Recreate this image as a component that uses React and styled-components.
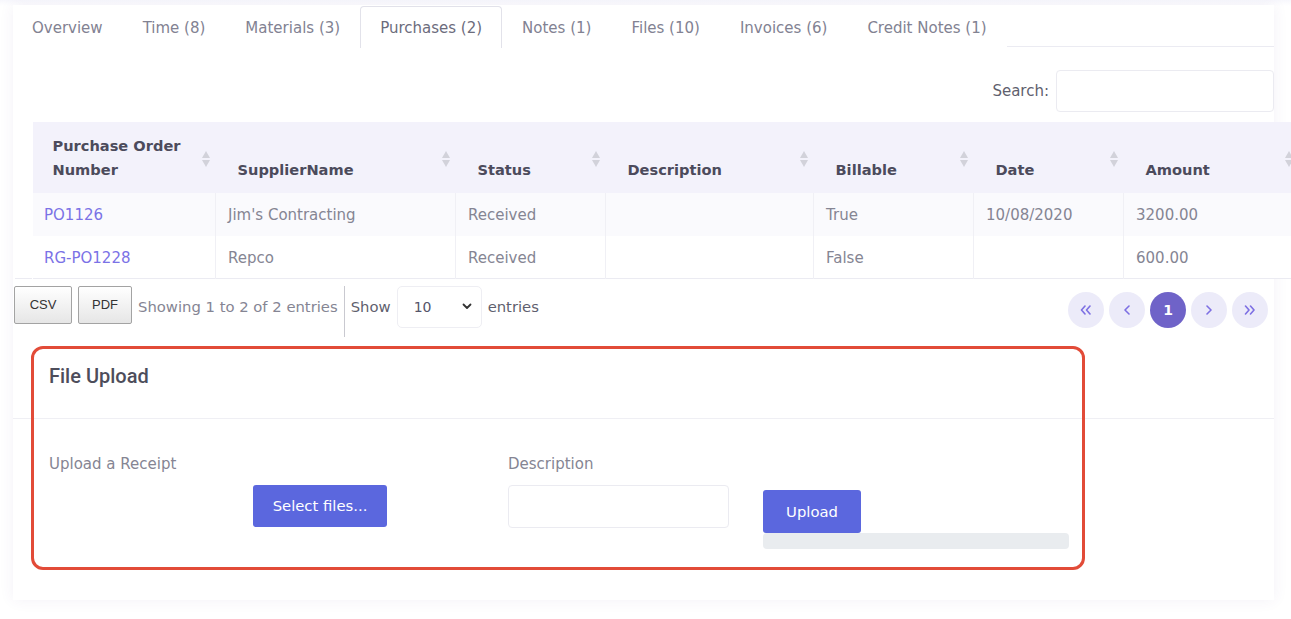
import React from "react";
import styled, { createGlobalStyle } from "styled-components";

const GlobalStyle = createGlobalStyle`
	html, body {
		margin: 0;
		padding: 0;
		background: #ffffff;
		overflow: hidden;
	}
	body {
		font-family: "DejaVu Sans", "Open Sans", sans-serif;
	}
	* {
		box-sizing: border-box;
	}
`;

const Page = styled.div`
	position: relative;
	width: 1291px;
	height: 619px;
	padding: 5px 17px 0 13px;
	background: linear-gradient(#f7f7fc, #ffffff 6px);
`;

const Card = styled.div`
	background: #ffffff;
	height: 595px;
	box-shadow: 0 0 14px rgba(82, 63, 140, 0.07);
`;

const TabBar = styled.ul`
	display: flex;
	list-style: none;
	margin: 0;
	padding: 1px 0 0 0;
	height: 42px;
	border-bottom: 1px solid #ebebf2;
`;

const Tab = styled.li`
	display: flex;
	align-items: center;
	padding: 0 19px 0 ${(p) => (p.$first ? "18px" : "19px")};
	height: 42px;
	font-size: 15px;
	color: ${(p) => (p.$active ? "#6c6c7c" : "#828292")};
	background: #ffffff;
	border: 1px solid ${(p) => (p.$active ? "#e2e2ea" : "transparent")};
	border-bottom: none;
	border-radius: 4px 4px 0 0;
	margin-bottom: -1px;
	white-space: nowrap;
`;

const SearchRow = styled.div`
	display: flex;
	justify-content: flex-end;
	align-items: center;
	gap: 7px;
	height: 75px;
	padding-top: 13px;
`;

const SearchLabel = styled.label`
	font-size: 15px;
	color: #5f5f6e;
`;

const SearchInput = styled.input`
	width: 218px;
	height: 42px;
	border: 1px solid #ebebf1;
	border-radius: 4px;
	outline: none;
`;

const Table = styled.table`
	border-collapse: collapse;
	table-layout: fixed;
	width: 1284px;
	margin-left: 1px;
`;

const HeadCell = styled.th`
	position: relative;
	height: 71px;
	padding: 0 22px 11px ${(p) => p.$pl || "22px"};
	vertical-align: bottom;
	text-align: left;
	font-size: 14.6px;
	font-weight: 700;
	line-height: 24px;
	color: #4c4b5c;
	background: ${(p) => (p.$blank ? "#ffffff" : "#f3f2fb")};

	${(p) =>
		!p.$blank &&
		`
	&::before, &::after {
		content: "";
		position: absolute;
		right: 6px;
		border-left: 4.5px solid transparent;
		border-right: 4.5px solid transparent;
	}
	&::before {
		top: 29px;
		border-bottom: 7px solid #d2d2da;
	}
	&::after {
		top: 38px;
		border-top: 7px solid #d2d2da;
	}`}
`;

const Row = styled.tr`
	background: ${(p) => (p.$alt ? "#fafafd" : "#ffffff")};
	border-bottom: 1px solid ${(p) => (p.$last ? "#ebebf2" : "transparent")};
`;

const Cell = styled.td`
	height: ${(p) => (p.$tall ? "43px" : "42px")};
	padding: 1px 12px 0 ${(p) => p.$pl || "12px"};
	font-size: 15px;
	color: #858593;
	white-space: nowrap;
	border-left: 1px solid ${(p) => (p.$noline ? "transparent" : "#f0f0f5")};
	background: ${(p) => (p.$blank ? "#ffffff" : "transparent")};
`;

const Link = styled.a`
	color: #7b72e6;
	text-decoration: none;
`;

const Footer = styled.div`
	display: flex;
	align-items: flex-start;
	height: 58px;
	padding: 7px 6px 0 1px;
`;

const ExportButton = styled.button`
	height: 38px;
	width: ${(p) => p.$w};
	margin-right: 6px;
	font-family: "Liberation Sans", Arial, sans-serif;
	font-size: 13px;
	color: #333333;
	background: linear-gradient(#ffffff, #e6e6e6);
	border: 1px solid #a3a3a3;
	border-radius: 2px;
	padding: 0;
`;

const InfoText = styled.div`
	height: 42px;
	display: flex;
	align-items: center;
	font-size: 14.8px;
	color: #858593;
	white-space: nowrap;
`;

const LengthBox = styled.div`
	display: flex;
	align-items: flex-start;
	gap: 6px;
	height: 51px;
	margin-left: 6px;
	padding-left: 6px;
	border-left: 1px solid #c9c9d0;
	font-size: 14.8px;
	color: #5f5f6e;
`;

const LengthText = styled.span`
	height: 42px;
	display: flex;
	align-items: center;
`;

const SelectBox = styled.div`
	display: flex;
	align-items: center;
	justify-content: space-between;
	width: 85px;
	height: 42px;
	padding: 0 9px 0 16px;
	border: 1px solid #eeeef3;
	border-radius: 5px;
	color: #55556a;
	font-size: 14px;
`;

const Pager = styled.div`
	display: flex;
	gap: 5px;
	margin-left: auto;
	padding-top: 6px;
`;

const PageDot = styled.div`
	width: 36px;
	height: 36px;
	border-radius: 50%;
	display: flex;
	align-items: center;
	justify-content: center;
	background: ${(p) => (p.$active ? "#6f63c8" : "#ecebf9")};
	color: ${(p) => (p.$active ? "#ffffff" : "#7d6fe3")};
	font-size: 14px;
	font-weight: 700;
`;

const Upload = styled.section`
	border-top: 1px solid transparent;
`;

const UploadHeader = styled.div`
	height: 81px;
	display: flex;
	align-items: center;
	padding: 0 0 4px 36px;
	border-bottom: 1px solid #efeff4;
`;

const UploadTitle = styled.h3`
	margin: 0;
	font-family: Roboto, sans-serif;
	font-weight: 500;
	font-size: 20px;
	color: #4d4d5b;
`;

const UploadBody = styled.div`
	display: grid;
	grid-template-columns: 459px 255px 306px;
	padding: 33px 0 0 36px;
`;

const Field = styled.div`
	display: flex;
	flex-direction: column;
	align-items: flex-start;
`;

const FieldLabel = styled.div`
	font-size: 15px;
	color: #858593;
	height: 24px;
	line-height: 24px;
	margin-bottom: 9px;
`;

const PrimaryButton = styled.button`
	height: ${(p) => p.$h || "42px"};
	width: ${(p) => p.$w};
	padding: 0;
	margin-left: ${(p) => p.$ml || "0"};
	margin-top: ${(p) => p.$mt || "0"};
	background: #5b67de;
	color: #ffffff;
	border: none;
	border-radius: 3px;
	font-family: "DejaVu Sans", sans-serif;
	font-size: 14.8px;
	font-weight: 500;
`;

const TextBox = styled.input`
	width: 221px;
	height: 43px;
	border: 1px solid #ebebf1;
	border-radius: 4px;
	outline: none;
`;

const Progress = styled.div`
	width: 306px;
	height: 16px;
	background: #e9ecef;
	border-radius: 4px;
`;

const Highlight = styled.div`
	position: absolute;
	left: 31px;
	top: 346px;
	width: 1054px;
	height: 224px;
	border: 3px solid #e24b38;
	border-radius: 12px;
	pointer-events: none;
`;

const tabs = ["Overview", "Time (8)", "Materials (3)", "Purchases (2)", "Notes (1)", "Files (10)", "Invoices (6)", "Credit Notes (1)"];

const columns = [
	{ label: "Purchase Order Number", w: 183, pl: "20px" },
	{ label: "SupplierName", w: 240 },
	{ label: "Status", w: 150 },
	{ label: "Description", w: 208 },
	{ label: "Billable", w: 160 },
	{ label: "Date", w: 150 },
	{ label: "Amount", w: 175 },
];

const rows = [
	["PO1126", "Jim's Contracting", "Received", "", "True", "10/08/2020", "3200.00"],
	["RG-PO1228", "Repco", "Received", "", "False", "", "600.00"],
];

function Chevron({ dir }) {
	const d = dir === "left" ? "M6 1 L2 5 L6 9" : "M2 1 L6 5 L2 9";
	return (
		<svg width="8" height="10" viewBox="0 0 8 10">
			<path d={d} fill="none" stroke="currentColor" strokeWidth="1.6" strokeLinecap="round" strokeLinejoin="round" />
		</svg>
	);
}

function Double({ dir }) {
	const d = dir === "left" ? "M5 1 L1.5 5 L5 9 M10 1 L6.5 5 L10 9" : "M1.5 1 L5 5 L1.5 9 M6.5 1 L10 5 L6.5 9";
	return (
		<svg width="12" height="10" viewBox="0 0 12 10">
			<path d={d} fill="none" stroke="currentColor" strokeWidth="1.6" strokeLinecap="round" strokeLinejoin="round" />
		</svg>
	);
}

export default function App() {
	return (
		<>
			<GlobalStyle />
			<Page>
				<Card>
					<TabBar>
						{tabs.map((t, i) => (
							<Tab key={t} $first={i === 0} $active={t === "Purchases (2)"}>
								{t}
							</Tab>
						))}
					</TabBar>

					<SearchRow>
						<SearchLabel>Search:</SearchLabel>
						<SearchInput />
					</SearchRow>

					<Table>
						<colgroup>
							<col style={{ width: 18 }} />
							{columns.map((c) => (
								<col key={c.label} style={{ width: c.w }} />
							))}
						</colgroup>
						<thead>
							<tr>
								<HeadCell $blank />
								{columns.map((c) => (
									<HeadCell key={c.label} $pl={c.pl}>
										{c.label}
									</HeadCell>
								))}
							</tr>
						</thead>
						<tbody>
							{rows.map((r, ri) => (
								<Row key={r[0]} $alt={ri === 0} $last={ri === rows.length - 1}>
									<Cell $blank $noline $tall={ri === 0} />
									{r.map((v, ci) => (
										<Cell key={ci} $noline={ci === 0} $pl={ci === 0 ? "11px" : undefined} $tall={ri === 0}>
											{ci === 0 ? <Link href="#">{v}</Link> : v}
										</Cell>
									))}
								</Row>
							))}
						</tbody>
					</Table>

					<Footer>
						<ExportButton $w="58px">CSV</ExportButton>
						<ExportButton $w="54px">PDF</ExportButton>
						<InfoText>Showing 1 to 2 of 2 entries</InfoText>
						<LengthBox>
							<LengthText>Show</LengthText>
							<SelectBox>
								<span>10</span>
								<svg width="10" height="7" viewBox="0 0 10 7">
									<path d="M1.5 1.5 L5 5 L8.5 1.5" fill="none" stroke="#333" strokeWidth="1.8" strokeLinecap="round" strokeLinejoin="round" />
								</svg>
							</SelectBox>
							<LengthText>entries</LengthText>
						</LengthBox>
						<Pager>
							<PageDot>
								<Double dir="left" />
							</PageDot>
							<PageDot>
								<Chevron dir="left" />
							</PageDot>
							<PageDot $active>1</PageDot>
							<PageDot>
								<Chevron dir="right" />
							</PageDot>
							<PageDot>
								<Double dir="right" />
							</PageDot>
						</Pager>
					</Footer>

					<Upload>
						<UploadHeader>
							<UploadTitle>File Upload</UploadTitle>
						</UploadHeader>
						<UploadBody>
							<Field>
								<FieldLabel>Upload a Receipt</FieldLabel>
								<PrimaryButton $ml="204px" $w="134px">
									Select files...
								</PrimaryButton>
							</Field>
							<Field>
								<FieldLabel>Description</FieldLabel>
								<TextBox />
							</Field>
							<Field>
								<PrimaryButton $mt="38px" $h="43px" $w="98px">
									Upload
								</PrimaryButton>
								<Progress />
							</Field>
						</UploadBody>
					</Upload>
				</Card>
				<Highlight />
			</Page>
		</>
	);
}
